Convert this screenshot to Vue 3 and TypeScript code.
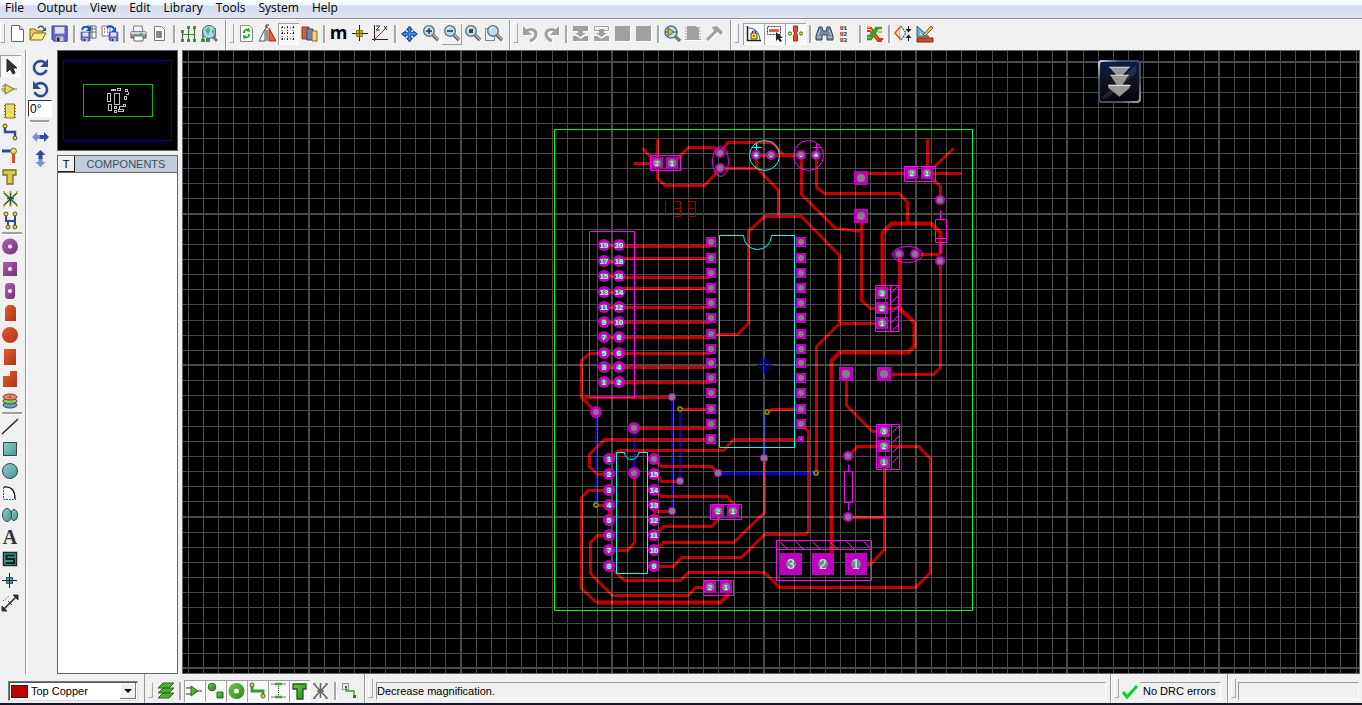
<script setup lang="ts">
import { ref } from 'vue'

type Tool = { id: string; label: string; on?: boolean; hot?: boolean } | null
type Pt = [number, number]

const menus: string[] = ['File', 'Output', 'View', 'Edit', 'Library', 'Tools', 'System', 'Help']

const t = (id: string, label: string, state = ''): Tool => ({ id, label, on: state === 'on', hot: state === 'hot' })

const groups: { name: string; tools: Tool[] }[] = [
  { name: 'file', tools: [t('new', 'New'), t('open', 'Open'), t('save', 'Save'), null, t('import', 'Import region'), t('export', 'Export region'), null, t('print', 'Print'), t('area', 'Set area'), null, t('net', 'Netlist'), t('globe', 'Design explorer')] },
  { name: 'view', tools: [t('refresh', 'Redraw'), t('flip', 'Flip'), t('grid', 'Grid', 'on'), t('layers', 'Layers'), null, t('metric', 'Metric'), t('origin', 'Origin'), t('polar', 'Polar'), null, t('pan', 'Pan'), t('zoomin', 'Zoom in'), t('zoomout', 'Zoom out', 'hot'), t('zoomall', 'Zoom all'), t('zoomarea', 'Zoom area')] },
  { name: 'edit', tools: [t('undo', 'Undo'), t('redo', 'Redo'), null, t('bcopy', 'Block copy'), t('bmove', 'Block move'), t('block', 'Block rotate'), t('block', 'Block delete'), null, t('pick', 'Pick parts'), t('make', 'Make package'), t('hammer', 'Decompose')] },
  { name: 'route', tools: [t('lock', 'Trace angle lock', 'on'), t('select', 'Auto track selection', 'on'), t('neck', 'Auto neck', 'on'), null, t('find', 'Find'), t('names', 'Name generator'), null, t('auto', 'Auto router'), null, t('conn', 'Connectivity'), t('drc', 'Design rules')] },
]

const modes: Tool[] = [t('arrow', 'Selection', 'on'), t('comp', 'Component'), t('package', 'Package'), t('track', 'Track'), t('via', 'Via'), t('zone', 'Zone'), t('rats', 'Ratsnest'), t('high', 'Connectivity highlight'), null,
  t('proud', 'Round pad'), t('psquare', 'Square pad'), t('pdil', 'DIL pad'), t('pedge', 'Edge pad'), t('scircle', 'Circular SMT pad'), t('srect', 'Rectangular SMT pad'), t('spoly', 'Polygonal SMT pad'), t('stack', 'Pad stack'), null,
  t('line', 'Line'), t('box', 'Box'), t('circle', 'Circle'), t('arc', 'Arc'), t('path', 'Path'), t('text', 'Text'), t('symbol', 'Symbol'), t('marker', 'Marker'), t('dim', 'Dimension')]

const filters: Tool[] = [t('sheets', 'Layers'), null, t('fcomp', 'Components', 'on'), t('fgfx', 'Graphics', 'on'), t('fpad', 'Pins', 'on'), t('ftrack', 'Tracks', 'on'), t('fvia', 'Vias', 'on'), t('fzone', 'Zones', 'on'), t('frats', 'Connections'), null, t('ftrace', 'Trace mode')]

const lens = (inner: string, x = 0): string => `<g transform="translate(${x} 0)"><path d="M11 11l6 6" stroke="#555" stroke-width="3.4"/><path d="M11.500 11l5.500 5.500" stroke="#bbb" stroke-width="1.400"/><circle cx="8" cy="8" r="5.300" fill="#b8dcec" stroke="#6b7478" stroke-width="1.400"/><path d="M4.500 7a4 4 0 0 1 4-3" stroke="#fff" fill="none"/>${inner}</g>`
const disk = (x: number, y: number, s: number): string => `<g transform="translate(${x} ${y}) scale(${s})"><path d="M0 0h16v16H2l-2-2z" fill="#6868bc" stroke="#38388e"/><path d="M3 1h10v7H3z" fill="#dfe4f4"/><path d="M4 11h8v5H4z" fill="#c8c8d0"/><path d="M5 12h3v4H5z" fill="#202050"/></g>`
const ball = (x: number, y: number, c = '#e8e030'): string => `<circle cx="${x}" cy="${y}" r="2" fill="${c}" stroke="#55551a"/>`
const dg = '<defs><linearGradient id="gp" x2="1" y2="1"><stop stop-color="#b060b8"/><stop offset="1" stop-color="#703078"/></linearGradient><linearGradient id="gr" x2="1" y2="1"><stop stop-color="#e85830"/><stop offset="1" stop-color="#a83818"/></linearGradient><linearGradient id="gt" x2="1" y2="1"><stop stop-color="#8fd0cc"/><stop offset="1" stop-color="#4a9490"/></linearGradient><linearGradient id="gg" x2="1" y2="1"><stop stop-color="#70c850"/><stop offset="1" stop-color="#2a8420"/></linearGradient></defs>'
const fade = (d: string): string => `<g fill="#fff" stroke="#fff" transform="translate(1 1)">${d}</g><g fill="#a0a0a0" stroke="#a0a0a0">${d}</g>`
const rotate = '<path d="M15 6A6.500 6.500 0 1 0 16.500 13" fill="none" stroke="#2a4c94" stroke-width="2.600"/><path d="M18 2v8h-8z" fill="#2a4c94"/>'

const icons: Record<string, string> = {
  new: '<path d="M4.500 2.500h8l4 4v12h-12z" fill="#fff" stroke="#666"/><path d="M12.500 2.500v4h4" fill="#ddd" stroke="#666"/>',
  open: '<path d="M2 17V6h5l2 2h6v3" fill="#e8cc50" stroke="#806820"/><path d="M2 17l4-7h12l-4 7z" fill="#fbe88a" stroke="#806820"/><path d="M10 5c2-3 5-2 6 1" fill="none" stroke="#456" stroke-width="1.500"/><path d="M18 4v4h-4z" fill="#456"/>',
  save: disk(3, 3, 0.95),
  import: '<path d="M9 3h9v12h-6V3M11 6h7M11 9h7M14 3v12" fill="#fff" stroke="#667"/>' + disk(3, 9, 0.56) + '<path d="M4 7c1-4 5-4 8-1" fill="none" stroke="#1c50a8" stroke-width="2"/><path d="M13 3v5H8z" fill="#1c50a8"/>',
  export: '<path d="M3 3h8v10H3z" fill="#fff" stroke="#778"/><path d="M5 6h1m2 0h1M5 9h1m2 0h1" stroke="#d03030" stroke-width="1.500"/>' + disk(10, 9, 0.56) + '<path d="M8 5c2-3 6-2 7 1" fill="none" stroke="#1c50a8" stroke-width="2"/><path d="M17 4v5h-5z" fill="#1c50a8"/>',
  print: '<path d="M6 3h8l1 6H5z" fill="#f4f4fa" stroke="#777"/><path d="M3 9h15v6H3z" fill="#989898" stroke="#555"/><path d="M3 9h15v2H3z" fill="#d0d0d0"/><path d="M6 13h9v5H6z" fill="#fff" stroke="#666"/><path d="M12 11h2" stroke="#20c020" stroke-width="2"/>',
  area: '<path d="M5.500 3.500h7l3 3v11h-10z" fill="#fff" stroke="#777"/><path d="M7.500 8.500h5v6h-5z" fill="#808890" stroke="#445" stroke-dasharray="1 1"/>',
  net: '<path d="M4.500 16V7M4.500 11.500h12M10.500 4v13M16.500 5v12" fill="none" stroke="#3c7838" stroke-width="1.200"/><path d="M3 16h3v3H3zm6 0h3v3H9zm6 0h3v3h-3zM9 3h3v3H9zm6 0h3v3h-3zM3 7h3v3H3z" fill="#4a8840"/>',
  globe: '<path d="M4 16V7M16 15V5M8 15v3" stroke="#3c7838" stroke-width="1.500"/><path d="M2 16h4v3H2zm5 0h4v3H7z" fill="#4a8840"/><circle cx="10" cy="9" r="6.500" fill="#a8d8ec" stroke="#557"/><path d="M6 7l4-3 1 4-2 4zM12 8l3-1v4z" fill="#68a860"/><path d="M14 14l4 4" stroke="#777" stroke-width="3"/>',
  refresh: '<path d="M4.500 2.500h9l3 3v13h-12z" fill="#f4fff4" stroke="#888"/><path d="M7 10c0-4 3-5 5-4l1-2 1 5-4-1 1-1c-2 0-2 1-2 3zM14 11c0 4-3 5-5 4l-1 2-1-5 4 1-1 1c2 0 2-1 2-3z" fill="#28a030"/>',
  flip: '<path d="M8 6v12H2z" fill="#fff" stroke="#555"/><path d="M12 5v13h7z" fill="#e06040" stroke="#a03820"/><path d="M10 7v11M9 2h3M9 2v4M9 4h2" stroke="#333" fill="none"/>',
  grid: '<path d="M4 4v14M9.500 4v14M15 4v14M3 5h14M3 10.500h14M3 16h14" fill="none" stroke="#444" stroke-dasharray="1 2"/><path d="M4 4h1M9 4h1M15 4h1M4 10h1M9 10h1M15 10h1M4 16h1M9 16h1M15 16h1" stroke="#222" stroke-width="2"/>',
  layers: '<path d="M3 4h7v12H3z" fill="#c86440" stroke="#804028"/><path d="M8 6h6v11H8z" fill="#7088c0" stroke="#384870"/><path d="M13 8h5v10h-5z" fill="#f0d868" stroke="#806820"/>',
  metric: '<text x="10.500" y="16" text-anchor="middle" font-family="Open Sans, sans-serif" font-weight="700" font-size="18">m</text>',
  origin: '<path d="M10.500 2v16M3 10.500h16" stroke="#222"/><path d="M7.500 7.500h6v6h-6z" fill="#c8b818" stroke="#887810"/><path d="M10.500 7v7M7 10.500h7" stroke="#555"/>',
  polar: '<path d="M4.500 2v16M2 16.500h16" stroke="#222"/><path d="M4 17L14 7" stroke="#c03020"/><path d="M6 3h4L6 7h4M14 3l3 4M17 3l-3 4" fill="none" stroke="#333"/>',
  pan: '<path d="M10.500 5v12M4 11h13" stroke="#184c98" stroke-width="3.400"/><path d="M10.500 3l3 4h-6zM10.500 19l3-4h-6zM2.500 11l4-3v6zM18.500 11l-4-3v6z" fill="#2f74cc" stroke="#184c98"/><path d="M10.500 6v10M5 11h11" stroke="#4a94e8" stroke-width="1.400"/>',
  zoomin: lens('<path d="M5 8h6M8 5v6" stroke="#234" stroke-width="1.500"/>', 1),
  zoomout: lens('<path d="M5 8h6" stroke="#234" stroke-width="1.500"/>', 1),
  zoomall: lens('<path d="M6 6h4v4H6z" fill="#445"/>', 1),
  zoomarea: '<path d="M2.500 5.500h9v12h-9z" fill="none" stroke="#222" stroke-dasharray="1 1"/>' + lens('', 2),
  undo: fade('<path d="M6 8c5-3 10-1 10 3 0 3-3 6-6 7" fill="none" stroke-width="3"/><path d="M3 3v9h9z" stroke="none"/>'),
  redo: fade('<path d="M15 8c-5-3-10-1-10 3 0 3 3 6 6 7" fill="none" stroke-width="3"/><path d="M18 3v9H9z" stroke="none"/>'),
  bcopy: fade('<path d="M3 3h15v5h-5v2h3l-5.500 4L5 10h3V8H3zM3 13h3l4.500 3 4.500-3h3v5H3z" stroke="none"/>'),
  bmove: fade('<path d="M3.500 3.500h14v4h-14z" fill="none"/><path d="M8 6h5v4h3l-5.500 4L5 10h3zM3 13h3l4.500 3 4.500-3h3v5H3z" stroke="none"/>'),
  block: fade('<path d="M3 3h15v15H3z" stroke="none"/>'),
  pick: '<path d="M13 13l5 5" stroke="#777" stroke-width="3.400"/><circle cx="9" cy="9" r="6" fill="#c0e0ec" stroke="#58788a" stroke-width="1.500"/><path d="M6 5v8l6-4z" fill="#d0c850" stroke="#555"/><path d="M3 9h3m6 0h4" stroke="#555"/>',
  make: fade('<path d="M4 3h9l3 3v11H4z" stroke="none"/><path d="M2 5h16M2 8h16M2 11h16M2 14h16M2 16.500h16"/>'),
  hammer: fade('<path d="M3 17L13 7" stroke-width="3" fill="none"/><path d="M8 4l5-1 6 6-2 3-3-3-3 1z" stroke="none"/>'),
  lock: '<path d="M4.500 3v14.500H18" stroke="#222" fill="none" stroke-width="1.500"/><path d="M5 5c8 0 11 4 12 12" fill="none" stroke="#3060b0"/><path d="M8 10h6v6H8z" fill="#f0d850" stroke="#605010"/><path d="M9.500 10V8h3v2M11 12v2" fill="none" stroke="#333"/>',
  select: '<path d="M3.500 3.500h13v8h-13z" fill="none" stroke="#333" stroke-dasharray="2 1"/><path d="M5 7.500h10" stroke="#e06040" stroke-width="3"/><path d="M12 9v9l2-2 2 3 2-1-2-3h3z" fill="#222"/>',
  neck: '<path d="M8.500 3h4v5l-1 2 1 3v5h-4v-5l1-3-1-2z" fill="#e05028" stroke="#903010"/><circle cx="5" cy="10.500" r="1.600" fill="#eedc50" stroke="#665810"/><circle cx="16" cy="10.500" r="1.600" fill="#eedc50" stroke="#665810"/>',
  find: '<path d="M5 4h3l1 4h3l1-4h3l3 9v4h-6v-5H8v5H2v-4z" fill="#78889a" stroke="#3c4654"/><path d="M4 12l2-5m9 0l2 5M3 14h4m7 0h4" stroke="#d0dce8"/>',
  names: '<g font-family="Liberation Mono, monospace" font-size="6" font-weight="700" fill="#222"><text x="5" y="7">U1</text><text x="5" y="13">U2</text><text x="5" y="19">U3</text></g>',
  auto: '<path d="M3 5h4l8 11h4M3 8h3l8 10h4" fill="none" stroke="#d83818" stroke-width="2"/><path d="M3 16h4l7-11h4M3 13h3l7-9" fill="none" stroke="#38a028" stroke-width="2.500"/><path d="M14 9h4M3 4h3" stroke="#d8c020" stroke-width="2"/>',
  conn: '<path d="M8 3l-6 7 6 7" fill="none" stroke="#d05030" stroke-width="1.500"/><path d="M8 3l5 7-5 7" fill="none" stroke="#3870c0" stroke-width="1.500" stroke-dasharray="2 1"/><path d="M8 3l-2 7 2 7" fill="none" stroke="#d0b030"/><path d="M15.500 3v5M15.500 18v-5" stroke="#222"/><path d="M12.500 6h6l-3 3.500zM12.500 15h6l-3-3.500z" fill="#222"/>',
  drc: '<path d="M3 3l12 11H3z" fill="#70b8b8" stroke="#206070"/><path d="M6 9v3h3z" fill="#f0f0f0"/><path d="M9 12l8-9 2 2-8 8z" fill="#e8c850" stroke="#706020"/><path d="M3 15h16v4H3z" fill="#d84820" stroke="#802810"/>',
  arrow: '<path d="M7 3v13l3-3 3 5 2-1-2-5h4z" fill="#333" stroke="#222"/>',
  comp: '<path d="M1 11h5m8 0h3M2 8h4m-4 5h4" stroke="#778030"/><path d="M5 6v10l9-5z" fill="#e0d858" stroke="#757020"/>',
  package: '<path d="M4 5.500h12M4 8.500h12M4 11.500h12M4 14.500h12M4 17.500h12" stroke="#7a7430"/><path d="M5.500 4h9v14h-9z" fill="#e4dc60" stroke="#807828"/>',
  track: '<path d="M5 5v5h10v7" fill="none" stroke="#2848a8" stroke-width="2.400"/>' + ball(5, 4) + ball(15, 16),
  via: '<path d="M2 7h10" stroke="#2848a8" stroke-width="3"/><path d="M13.500 9v10" stroke="#d85028" stroke-width="3"/><circle cx="13.500" cy="7" r="3" fill="#e4dc60" stroke="#807828"/>',
  zone: '<path d="M3 4h13v5h-3v9H7V9H3z" fill="#d8cc50" stroke="#757020" stroke-width="1.300"/>',
  rats: '<path d="M10.500 3v15M4 5l13 12M17 5L4 17M7 10.500h7" stroke="#305c28" stroke-width="1.600"/>' + '<path d="M3 3h2v2H3zm13 0h2v2h-2zM3 17h2v2H3zm13 0h2v2h-2zM9.500 3h2v2h-2zm0 14h2v2h-2z" fill="#c8c030"/>',
  high: '<path d="M6 5v6h9M15 5v12M8 11v6" fill="none" stroke="#2848a8" stroke-width="2"/>' + ball(6, 4) + ball(15, 4) + ball(8, 17) + ball(15, 17),
  proud: dg + '<circle cx="10" cy="10.500" r="8" fill="url(#gp)"/><circle cx="10" cy="10.500" r="2" fill="#fff"/>',
  psquare: '<path d="M3 4h14v14H3z" fill="url(#gp)"/><circle cx="10" cy="11" r="2" fill="#fff"/>',
  pdil: '<rect x="5" y="3" width="10" height="16" rx="3.500" fill="url(#gp)"/><circle cx="10" cy="11" r="2" fill="#fff"/>',
  pedge: '<path d="M5 19V6l3-3h5l3 3v13z" fill="url(#gr)"/>',
  scircle: '<circle cx="10" cy="11" r="8" fill="url(#gr)"/>',
  srect: '<path d="M4 3h12v16H4z" fill="url(#gr)"/>',
  spoly: '<path d="M3 8h7V3h7v16H3z" fill="url(#gr)"/>',
  stack: '<ellipse cx="10" cy="15" rx="7" ry="3" fill="#7098e0" stroke="#445"/><ellipse cx="10" cy="11" rx="7" ry="3" fill="#80d050" stroke="#354"/><ellipse cx="10" cy="7" rx="7" ry="3" fill="#f08060" stroke="#744"/><path d="M9 7h2" stroke="#333"/>',
  line: '<path d="M2 18L18 3" stroke="#222" stroke-width="1.400"/>',
  box: '<path d="M3.500 4.500h13v13h-13z" fill="url(#gt)" stroke="#2b4a4a"/>',
  circle: '<circle cx="10" cy="11" r="7.500" fill="url(#gt)" stroke="#2b4a4a"/>',
  arc: '<path d="M4 5c7-1 11 3 11 12" fill="#fff" stroke="#111" stroke-width="1.300"/><path d="M3.500 5v12.500H16" fill="none" stroke="#2060c0" stroke-dasharray="2 1"/>',
  path: '<ellipse cx="14" cy="11" rx="3.500" ry="5.500" fill="url(#gt)" stroke="#2b4a4a"/><ellipse cx="7" cy="11" rx="4.500" ry="6.500" fill="url(#gt)" stroke="#2b4a4a"/>',
  text: '<text x="10" y="18" text-anchor="middle" font-family="Liberation Serif, serif" font-weight="700" font-size="20" fill="#333">A</text>',
  symbol: '<path d="M3.500 4.500h13v13h-13z" fill="#4a9490" stroke="#132" stroke-width="1.500"/><path d="M14.500 7.500h-8v3.500h7.500v4H5.500" fill="none" stroke="#122" stroke-width="2"/>',
  marker: '<path d="M9.500 3v15M2 10.500h15" stroke="#222"/><path d="M6.500 7.500h6v6h-6z" fill="#5aa09c" stroke="#356"/><path d="M9.500 8v5M7 10.500h5" stroke="#222"/>',
  dim: '<path d="M4 17L16 5" stroke="#333" stroke-width="1.700"/><path d="M13 3h5v5zM2 14v5h5zM8 9l4 4" fill="#333" stroke="#333"/><path d="M3 9L9 4" stroke="#333" stroke-dasharray="1 2"/>',
  sheets: '<path d="M3 18l5-5h11l-5 5zM3 13l5-5h11l-5 5zM3 8l5-5h11l-5 5z" fill="#4eb034" stroke="#2a6c20"/>',
  fcomp: '<path d="M2 8h6M2 14h6M13 11h5" stroke="#333"/><path d="M7 6v10l7-5z" fill="url(#gg)" stroke="#2a6a20"/>',
  fgfx: '<circle cx="7" cy="7" r="3.800" fill="url(#gg)" stroke="#2a6a20"/><path d="M12 12h6v6h-6z" fill="url(#gg)" stroke="#2a6a20"/>',
  fpad: dg + '<circle cx="10.500" cy="11" r="8" fill="url(#gg)"/><circle cx="10.500" cy="11" r="2.500" fill="#f4f4f4"/>',
  ftrack: '<path d="M5 6v5h11v5" fill="none" stroke="#3a9a2c" stroke-width="2.800"/>' + ball(5, 5, '#c8e850') + ball(16, 16, '#c8e850'),
  fvia: '<path d="M3 4h15M3 17h15" stroke="#777"/><path d="M7 4h7M7 17h7" stroke="#48a030" stroke-width="2.500"/><path d="M10.500 6v10" stroke="#333" stroke-dasharray="1 1"/>',
  fzone: '<path d="M4 4h13v5h-3v10H8V9H4z" fill="url(#gg)" stroke="#1c5c18" stroke-width="1.300"/>',
  frats: '<path d="M10.500 3v15M4 4l13 14M17 4L4 18M7 11h7" stroke="#666" stroke-width="1.600"/><path d="M3 3h3v2H3zm12 0h3v2h-3zM3 17h3v2H3zm12 0h3v2h-3z" fill="#888"/>',
  ftrace: '<path d="M3.500 3.500h6v6h-6z" fill="#e4f0e0" stroke="#333" stroke-dasharray="1 1"/><path d="M7 7v4h8v5" fill="none" stroke="#3a9a2c" stroke-width="1.300"/><path d="M6 6h2v2H6zm8 9h3v3h-3z" fill="#287a20"/>',
  cw: rotate,
  ccw: `<g transform="translate(21 0) scale(-1 1)">${rotate}</g>`,
  fliph: '<path d="M2 11l5-5v3h4v4H7v3z" fill="#7090d8"/><path d="M19 11l-5-5v3h-4v4h4v3z" fill="#2a50a0"/>',
  flipv: '<path d="M10.500 19l-5-5h3v-4h4v4h3z" fill="#7090d8"/><path d="M10.500 2l-5 5h3v4h4V7h3z" fill="#2a50a0"/>',
}

const angle = ref('0°')
const layer = ref('Top Copper')

const gridLines = (origin: number, step: number) =>
  Array.from({ length: 260 }, (_, i) => i - 60).map((k) => ({ at: Math.round(origin + k * step), major: k % 10 === 0 }))
const columns = gridLines(764, 15.17)
const rows = gridLines(365, 15.15)

const thin: string[] = [
  '657,139 657,178 665,185 704,185 720,168', '642,148 651,157', '633,163 657,163', '675,160 688,147 714,147 720,153',
  '720,153 727,142 772,142 783,155', '756,155 801,155', '756,155 756,168', '720,168 757,168 778,190 778,216',
  '711,334 737,334 748,323 748,231 764,216 801,216 839,255 839,323 816,346 816,473', '839,323 882,323',
  '801,155 801,194 835,228 861,231', '816,155 816,187 824,193 899,193 907,202 907,223', '861,173 912,173',
  '861,216 861,300 870,308 899,308', '940,260 940,367 933,374 884,374', '927,173 927,139', '930,170 953,148',
  '927,173 961,173', '930,176 940,186 940,200', '915,254 940,254', '899,254 899,308', '846,374 846,405 872,431 884,431',
  '848,456 857,446 918,446 930,458 930,572 915,587 779,587 764,572 688,572 680,580 624,580 609,566',
  '884,462 884,549 870,564 856,564', '848,517 884,517', '801,424 808,431 808,531 805,534 764,534 741,557 681,557 673,566 654,566',
  '801,439 733,439 723,450 618,450 609,459', '764,458 764,512 733,542 663,542 654,550', '767,412 771,409 801,409',
  '654,459 661,466 711,466 718,473', '654,473 661,481 680,481', '680,409 711,409', '583,397 672,397',
  '604,353 589,353 581,360 581,397 596,412', '596,505 609,505 609,520', '634,428 711,428', '634,473 634,542 627,550 609,550',
  '711,439 604,439 589,454 589,466 597,474 609,474', '609,490 588,490 581,497 581,588 596,602',
  '609,535 597,535 590,542 590,573 612,595 688,595 695,587 710,587', '654,490 661,496 726,496 734,504',
  '654,505 654,520', '654,511 672,511', '654,535 663,526 711,526 718,519 718,511',
]
const thick: string[] = ['882,293 882,232 891,223 931,223 940,232 940,254', '899,308 914,322 914,345 908,352 839,352 831,360 831,555', '596,602 720,602 727,595 727,587']
const blue: string[] = ['764,412 764,458', '718,473 816,473', '680,409 680,481', '672,397 672,511', '596,412 596,505', '634,428 634,473']

const rowY: number[] = [245, 261, 276, 292, 307, 322, 337, 353, 367, 382]
const trackY: number[] = [246, 258, 277, 288, 307, 322, 337, 353, 367, 382]
rowY.forEach((y, i) => thin.push(`604,${y} 619,${y}`, `619,${trackY[i]} 711,${trackY[i]}`))

interface Pad { x: number; y: number; r: number; sq?: boolean; h: number; n?: string }
const pads: Pad[] = []
const square = (size: number, hole: number, list: [number, number, string?][]) =>
  list.forEach(([x, y, n]) => pads.push({ x, y, r: size / 2, sq: true, h: hole, n }))
const round = (r: number, hole: number, list: [number, number, string?][]) =>
  list.forEach(([x, y, n]) => pads.push({ x, y, r, h: hole, n }))

rowY.forEach((y, i) => round(6, 3, [[604, y, String(19 - 2 * i)], [619, y, String(20 - 2 * i)]]))
const dip: number[] = [242, 258, 273, 288, 303, 318, 334, 349, 363, 378, 393, 409, 424, 439]
dip.forEach((y, i) => {
  square(10, 3, [[711, y]])
  if (i < 13) square(10, 3, [[801, y]])
})
const small: number[] = [459, 474, 490, 505, 520, 535, 550, 566]
small.forEach((y, i) => round(6, 3, [[609, y, String(i + 1)], [654, y, i ? String(16 - i) : undefined]]))
square(12, 4, [[657, 163, '2'], [672, 163, '1'], [912, 173, '2'], [927, 173, '1'], [882, 293, '3'], [882, 308, '2'], [882, 323, '1'],
  [884, 431, '3'], [884, 446, '2'], [884, 462, '1'], [718, 511, '2'], [733, 511, '1'], [710, 587, '2'], [726, 587, '1']])
square(14, 4, [[861, 178], [861, 216], [846, 374], [884, 374]])
square(22, 5, [[791, 564, '3'], [823, 564, '2'], [856, 564, '1']])
round(5, 3, [[720, 153], [720, 168], [756, 155, '+'], [771, 155, '-'], [801, 155, '-'], [816, 155, '+'], [940, 200], [940, 261], [899, 254], [915, 254], [848, 456], [848, 517]])
round(6, 3, [[596, 412], [634, 428], [634, 473]])
round(4, 3, [[672, 397], [680, 481], [672, 511], [718, 473], [764, 458]])
square(6, 1, [[801, 439]])
const vias: Pt[] = [[680, 409], [767, 412], [816, 473], [596, 505]]

const outline = 'M589 231h45v166h-45zM650 155h30v15h-30zM904 166h31v15h-31zM940 210v9M935 219h11v23h-11zM935 238h11M940 242v11M875 285h23v46h-23zM890 285v46M876 424h23v45h-23zM891 424v45M844 471h8v31h-8zM848 464v7M848 502v8M776 540h95v40h-95zM776 549h95M710 504h31v15h-31zM703 580h30v15h-30zM812 147h9M816 143v9'
const hatch = 'M891 292l6-6M891 302l7-7M891 312l7-7M891 322l7-7M892 330l6-6M892 432l7-7M892 442l7-7M892 452l7-7M892 462l7-7M779 541l8 8M795 541l8 8M812 541l8 8M829 541l8 8M846 541l8 8M863 541l8 8'
</script>

<template>
  <div class="app">
    <nav class="menu" aria-label="Main menu">
      <button v-for="m in menus" :key="m" type="button">{{ m }}</button>
    </nav>
    <header class="bars">
      <div v-for="g in groups" :key="g.name" class="bar" :class="g.name">
        <template v-for="(tool, i) in g.tools" :key="i">
          <button v-if="tool" type="button" class="tool" :class="{ on: tool.on, hot: tool.hot }" :aria-label="tool.label">
            <svg viewBox="0 0 21 21" v-html="icons[tool.id]" />
          </button>
          <i v-else class="sep" />
        </template>
      </div>
    </header>

    <main class="work">
      <div class="modes">
        <template v-for="(tool, i) in modes" :key="i">
          <button v-if="tool" type="button" class="tool" :class="{ on: tool.on }" :aria-label="tool.label">
            <svg viewBox="0 0 21 21" v-html="icons[tool.id]" />
          </button>
          <i v-else class="rule" />
        </template>
      </div>
      <div class="orient">
        <button type="button" class="tool" aria-label="Rotate clockwise"><svg viewBox="0 0 21 21" v-html="icons.cw" /></button>
        <button type="button" class="tool" aria-label="Rotate anti-clockwise"><svg viewBox="0 0 21 21" v-html="icons.ccw" /></button>
        <input v-model="angle" aria-label="Rotation angle" />
        <i class="rule" />
        <button type="button" class="tool" aria-label="X-mirror"><svg viewBox="0 0 21 21" v-html="icons.fliph" /></button>
        <button type="button" class="tool" aria-label="Y-mirror"><svg viewBox="0 0 21 21" v-html="icons.flipv" /></button>
      </div>
      <aside class="side">
        <div class="preview">
          <svg viewBox="57 50 121 101" fill="none" shape-rendering="crispEdges">
            <path d="M63.500 60.500h108v80h-108z" stroke="#0000c0" />
            <path d="M83.500 84.500h69v32h-69z" stroke="#00c000" />
            <path d="M107.500 93.500h3v8h-3zM114.500 93.500h5v11h-5zM108.500 104.500h3v6h-3zM111 89.500h4v1h-4zM117.500 88.500h3v2h-3zM125.500 89.500h2v2h-2zM126 94.500h2v-3M124.500 96.500h2v3h-2zM123.500 104.500h2v2h-2zM120 106.500h3M114.500 106.500h2v2h-2zM114.500 110.500h2v2h-2zM118 109.500h5v2h-5zM119 106v3" stroke="#c0c0c0" />
          </svg>
        </div>
        <section class="parts">
          <div class="parts-head"><button type="button" aria-label="Toggle list">T</button><span>COMPONENTS</span></div>
        </section>
      </aside>
      <div class="board">
        <svg class="sheet" aria-label="Board layout">
          <g transform="translate(-183 -51)">
            <g class="blue"><polyline v-for="p in blue" :key="p" :points="p" /></g>
            <g class="red"><polyline v-for="p in thin" :key="p" :points="p" /></g>
            <g class="red thick"><polyline v-for="p in thick" :key="p" :points="p" /></g>
            <g class="grid">
              <rect v-for="l in columns" :key="'v' + l.at" :x="l.major ? l.at - 1 : l.at" y="-400" :width="l.major ? 2 : 1" height="3600" />
              <rect v-for="l in rows" :key="'h' + l.at" x="-200" :y="l.major ? l.at - 1 : l.at" width="4000" :height="l.major ? 2 : 1" />
            </g>
            <g class="fine" transform="translate(.5 .5)">
              <path d="M554 129h418v481h-418z" stroke="#00ff00" />
              <path d="M665 201v14M672 201h8v15h-8M672 208h8M695 208h-7v-7h7v15h-7M703 201v14" stroke="#a80000" />
              <path d="M719 235h24a14 14 0 0 0 28 0h23v212h-75zM616 452h8a7 7 0 0 0 14 0h9v121h-31zM752 147h9M756 143v9" stroke="#00ffff" />
              <circle cx="764" cy="155" r="15" stroke="#00ffff" />
              <path :d="outline" stroke="#ff00ff" />
              <path :d="hatch" stroke="#ff00ff" />
              <circle cx="808" cy="155" r="15" stroke="#ff00ff" />
              <ellipse cx="720" cy="161" rx="8" ry="15" stroke="#ff00ff" />
              <ellipse cx="907" cy="254" rx="15" ry="8" stroke="#ff00ff" />
              <path d="M756 365h16M764 357v17" stroke="#0000c0" />
              <circle cx="764" cy="365" r="5" stroke="#0000c0" />
            </g>
            <g>
              <g v-for="(p, i) in pads" :key="i">
                <rect v-if="p.sq" :x="p.x - p.r" :y="p.y - p.r" :width="p.r * 2" :height="p.r * 2" fill="#c000c0" />
                <circle v-else :cx="p.x" :cy="p.y" :r="p.r" fill="#c000c0" />
                <circle :cx="p.x" :cy="p.y" :r="p.h" fill="#808080" />
                <text v-if="p.n" :x="p.x" :y="p.y + (p.r > 8 ? 5 : 3)" :class="{ big: p.r > 8 }">{{ p.n }}</text>
              </g>
              <circle v-for="v in vias" :key="v[0]" :cx="v[0]" :cy="v[1]" r="2" fill="#000" stroke="#808000" stroke-width="2" />
            </g>
          </g>
        </svg>
        <button type="button" class="float" aria-label="Show more">
          <svg viewBox="0 0 42 42">
            <defs>
              <linearGradient id="fb" x2="0" y2="1"><stop stop-color="#101c48" /><stop offset=".5" stop-color="#10131c" /><stop offset="1" stop-color="#030408" /></linearGradient>
              <linearGradient id="fs" x2="1" y2="1"><stop stop-color="#d8d8e8" /><stop offset=".25" stop-color="#404868" /><stop offset=".75" stop-color="#50505c" /><stop offset="1" stop-color="#a0a0a8" /></linearGradient>
            </defs>
            <rect x="1" y="1" width="40" height="40" rx="3" fill="url(#fb)" stroke="url(#fs)" stroke-width="2" />
            <path d="M3 37L37 5v8L8 38z" fill="#fff" opacity=".1" />
            <path d="M11 7h20l-7 8h6l-6 9h7v3L21 36 10 27v-3h8l-6-9h6z" fill="#989898" />
            <path d="M11 7h20M12 15h18M10 25h22" stroke="#e0e0e0" />
          </svg>
        </button>
      </div>
    </main>

    <footer class="status">
      <div class="cell pick">
        <span class="swatch" />
        <select v-model="layer" aria-label="Current layer"><option>Top Copper</option><option>Bottom Copper</option></select>
        <span class="drop" />
      </div>
      <div class="bar filters">
        <template v-for="(tool, i) in filters" :key="i">
          <button v-if="tool" type="button" class="tool" :class="{ on: tool.on }" :aria-label="tool.label">
            <svg viewBox="0 0 21 21" v-html="icons[tool.id]" />
          </button>
          <i v-else class="sep" />
        </template>
      </div>
      <div class="bar message"><output class="field">Decrease magnification.</output></div>
      <div class="bar check">
        <svg viewBox="0 0 18 16"><path d="M2 9l4 5L16 3" fill="none" stroke="#00d820" stroke-width="3" /></svg>
        <output class="field">No DRC errors</output>
      </div>
      <div class="bar coords"><output class="field" /></div>
    </footer>
  </div>
</template>

<style scoped>
* { box-sizing: border-box; }
.app { min-height: 100vh; display: flex; flex-direction: column; background: #f0f0f0; border-bottom: 2px solid #14142c; font: 11px/16px "Liberation Sans", Arial, sans-serif; color: #000; overflow: hidden; }
button { font: inherit; color: inherit; padding: 0; border: 0; background: none; }
.menu { display: flex; align-items: flex-start; gap: 13px; height: 19px; padding-left: 5px; border-bottom: 1px solid #8c8c8c; background: linear-gradient(#fdfeff 0, #eef2fa 5px, #d4dbed 6px, #dfe5f4 100%); font: 12px/16px "Open Sans", sans-serif; }
.bars { display: flex; height: 31px; border-top: 1px solid #fff; }
.bar { display: flex; align-items: center; position: relative; border-right: 1px solid #999; box-shadow: 1px 0 #fff; flex: none; }
.bar::before { content: ""; align-self: stretch; width: 3px; margin: 3px 2px 4px 3px; border: 1px solid #a8a8a8; border-left-color: #fff; border-top-color: #fff; flex: none; }
.bars .bar { padding-bottom: 3px; }
.file { width: 226px; }
.file::before { margin-left: 0; }
.view { width: 284px; }
.edit { width: 221px; }
.route { flex: 1; border-right: 0; box-shadow: none; }
.route::before { margin-right: 4px; }
.tool { width: 21px; height: 22px; flex: none; display: grid; place-items: center; }
.tool svg { display: block; width: 21px; height: 21px; }
.on { background: #f8f8f8; box-shadow: inset 1px 1px #a0a0a0, inset -1px -1px #fff; }
.hot { box-shadow: inset 1px 1px #fff, inset -1px -1px #a0a0a0; }
.sep { width: 8px; height: 18px; flex: none; display: flex; justify-content: center; }
.sep::before { content: ""; width: 2px; background: #a8a8a8; border-right: 1px solid #fff; }
.work { flex: 1; display: flex; min-height: 0; }
.modes { width: 26px; border-right: 1px solid #999; padding-top: 5px; display: flex; flex-direction: column; box-shadow: 1px 0 #fff; flex: none; }
.rule { height: 4px; display: flex; align-items: center; flex: none; }
.rule::before { content: ""; flex: 1; height: 2px; margin: 0 3px 0 2px; background: #a0a0a0; border-bottom: 1px solid #fff; }
.orient { width: 31px; padding: 6px 5px 0 2px; display: flex; flex-direction: column; flex: none; }
.orient .tool { align-self: center; }
.orient input { width: 24px; height: 17px; border: 1px solid #fff; border-top-color: #333; border-left-color: #333; padding: 0 1px; font: 12px/14px "Liberation Sans", sans-serif; background: #fff; }
.orient .rule { height: 8px; }
.side { width: 121px; display: flex; flex-direction: column; gap: 4px; flex: none; }
.preview { border: 1px solid #666; background: #000; height: 101px; }
.preview svg { display: block; margin: -1px; width: 121px; height: 101px; }
.parts { flex: 1; background: #fff; border: 1px solid #666; }
.parts-head { display: flex; height: 17px; background: #c0ccda; border-bottom: 1px solid #666; line-height: 16px; }
.parts-head button { width: 17px; background: #f0f0f0; border-right: 1px solid #222; border-bottom: 1px solid #222; box-shadow: inset 1px 1px #fff; }
.parts-head span { flex: 1; text-align: center; color: #405058; }
.board { flex: 1; position: relative; margin: 0 2px 0 4px; background: #000; border: 1px solid #666; min-width: 0; overflow: hidden; isolation: isolate; }
.sheet { position: absolute; inset: 0; width: 100%; height: 100%; }
.red, .blue { fill: none; stroke: #c00000; stroke-width: 3; transform: translate(.5px, .5px); }
.blue { stroke: #0000c8; }
.thick { stroke-width: 4; }
.grid { fill: #4a4a4a; mix-blend-mode: screen; shape-rendering: crispEdges; }
.fine { fill: none; }
.sheet text { font: bold 8px "Liberation Sans", sans-serif; fill: #b0ffff; text-anchor: middle; }
.sheet .big { font: 14px "Liberation Sans", sans-serif; }
.float { position: absolute; left: 915px; top: 9px; width: 43px; height: 43px; }
.float svg { display: block; width: 100%; height: 100%; }
.status { display: flex; height: 29px; padding-right: 3px; flex: none; }
.pick { position: relative; width: 130px; height: 20px; margin: 7px 6px 0 8px; border: 1px solid; border-color: #777 #ddd #ddd #777; box-shadow: inset 1px 1px #555; background: #fff; flex: none; display: flex; align-items: center; }
.swatch { width: 17px; height: 13px; margin-left: 2px; background: #c00000; border: 1px solid #222; flex: none; }
.pick select { appearance: none; flex: 1; min-width: 0; border: 0; background: none; padding: 0 0 0 3px; font: inherit; color: #000; }
.drop { width: 16px; height: 16px; margin-right: 1px; background: #f0f0f0; box-shadow: inset -1px -1px #777, inset 1px 1px #fff; display: grid; place-items: center; pointer-events: none; }
.drop::before { content: ""; border: 4px solid transparent; border-top-color: #000; border-bottom: 0; }
.status .bar::before { margin: 4px 2px 5px 3px; }
.filters { width: 221px; border-left: 1px solid #999; padding-top: 4px; }
.message { flex: 1; min-width: 0; }
.field { display: block; flex: 1; height: 18px; border: 1px solid; border-color: #999 #fff #fff #999; white-space: nowrap; margin-top: 5px; }
.message .field { margin: 5px 4px 0 1px; }
.check { width: 117px; }
.check svg { width: 18px; height: 16px; margin: 5px 1px 0 0; flex: none; }
.check .field { margin-right: 6px; padding-left: 3px; border-left: 0; }
.coords { width: 131px; border-right: 0; box-shadow: none; }
</style>

<style>
body { margin: 0; }
</style>
